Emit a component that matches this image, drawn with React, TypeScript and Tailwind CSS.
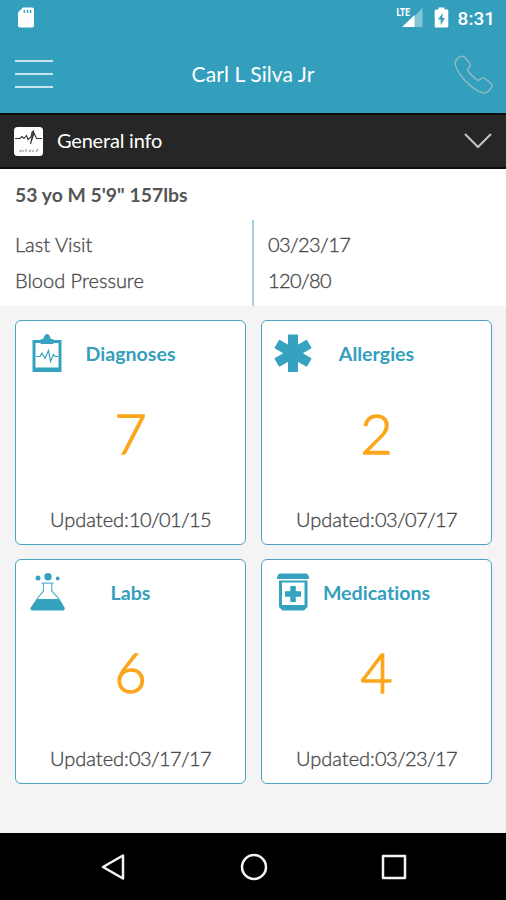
import React from 'react';

function DiagnosesIcon() {
  return (
    <svg viewBox="0 0 38 38" className="w-[38px] h-[38px]">
      <path d="M4.500 6H13v3H7.500v24.500h23V9H25V6h8.500v32h-29z" fill="#35a3c0" />
      <path d="M12.500 10V5.500l3-1Q16.500 0 19 0t3.500 4.500l3 1V10z" fill="#35a3c0" />
      <path d="M8 22.500h4l2-3.500 3 5.500 3.500-8 2 11 3-7 1.500 2H30" fill="none" stroke="#35a3c0" strokeWidth="1.200" />
    </svg>
  );
}

function AllergiesIcon() {
  return (
    <svg viewBox="0 0 38 38" className="w-[38px] h-[38px]" fill="#35a3c0">
      <rect x="14" y="0.500" width="10" height="37.500" rx="0.800" />
      <rect x="14" y="0.500" width="10" height="37.500" rx="0.800" transform="rotate(60 19 19.250)" />
      <rect x="14" y="0.500" width="10" height="37.500" rx="0.800" transform="rotate(120 19 19.250)" />
    </svg>
  );
}

function LabsIcon() {
  return (
    <svg viewBox="0 0 38 38" className="w-[38px] h-[38px]">
      <g fill="#35a3c0">
        <circle cx="10" cy="5" r="2.500" />
        <circle cx="20" cy="3.700" r="3.700" />
        <circle cx="29.700" cy="5.500" r="1.900" />
        <path d="M8.500 26h23L36.500 34.500Q37.500 37.500 34.500 37.500h-30Q1.500 37.500 2.800 34.500z" />
      </g>
      <path d="M13.500 10.200h12M15.500 10.500v7.500L9 26M23.700 10.500v7.500L31 26" fill="none" stroke="#5db5cc" strokeWidth="1.200" />
    </svg>
  );
}

function MedicationsIcon() {
  return (
    <svg viewBox="0 0 38 38" className="w-[38px] h-[38px]" fill="#35a3c0">
      <path d="M6 0.500h26Q35 1 35 6H3Q3 1 6 0.500z" />
      <path fillRule="evenodd" d="M5 7.500h28.500V34l-3.500 3.500H8.500L5 34zM8 9.500v22.500h22.500v-22.500z" />
      <path d="M16.300 13h5.500v5.200H27v5.600h-5.200V29h-5.500v-5.200H11v-5.600h5.300z" />
    </svg>
  );
}

const cards = [
  { title: 'Diagnoses', count: 7, updated: '10/01/15', icon: DiagnosesIcon },
  { title: 'Allergies', count: 2, updated: '03/07/17', icon: AllergiesIcon },
  { title: 'Labs', count: 6, updated: '03/17/17', icon: LabsIcon },
  { title: 'Medications', count: 4, updated: '03/23/17', icon: MedicationsIcon },
];

function StatusBar() {
  return (
    <div className="h-9 flex items-center justify-between pl-[17px] pr-[11px] text-white">
      <svg viewBox="0 0 17 22" className="w-[17px] h-[22px]">
        <path d="M6 0.500h9q2 0 2 2v16q0 2-2 2H3q-2 0-2-2V5.500z" fill="#fff" />
        <path d="M7.300 3v3M10.500 3v3M13.600 3v3" stroke="#339fbd" strokeWidth="1.400" />
      </svg>
      <div className="flex items-center">
        <svg viewBox="0 0 28 22" className="w-7 h-[22px] mr-[10px]">
          <path d="M8 20L26.500 1v19z" fill="#83c4d7" />
          <path d="M6 20L18.500 8v12z" fill="#fff" />
          <path d="M0 0h15.500v9.500H0z" fill="#339fbd" />
          <text x="0.500" y="9" fontFamily="Roboto" fontSize="11" fontWeight="800" textLength="13.500" lengthAdjust="spacingAndGlyphs" fill="#fff">LTE</text>
        </svg>
        <svg viewBox="0 0 15 22" className="w-[15px] h-[22px] mr-[9px]">
          <path d="M4.500 0.500h6V2.500H13q1.300 0 1.300 1.300v15.400Q14.300 20.500 13 20.500H2Q0.700 20.500 0.700 19.200V3.800Q0.700 2.500 2 2.500h2.500z" fill="#fff" />
          <path d="M8.800 6L4 12.500h2.700v5.500L11 11H8.300z" fill="#339fbd" />
        </svg>
        <span className="font-['Roboto'] text-[19px] leading-none font-medium">8:31</span>
      </div>
    </div>
  );
}

function Header() {
  return (
    <div className="h-[77px] grid grid-cols-[1fr_auto_1fr] items-center px-[15px] pb-[2px] text-white">
      <div className="flex flex-col gap-[11px] w-[38px]">
        <div className="h-0.5 bg-[#c5e4ee]" />
        <div className="h-0.5 bg-[#c5e4ee]" />
        <div className="h-0.5 bg-[#c5e4ee]" />
      </div>
      <h1 className="text-[21px] leading-none tracking-[0.1px]">Carl L Silva Jr</h1>
      <svg viewBox="0 0 40 40" className="w-10 h-10 justify-self-end -mr-[2px]" fill="none" stroke="#93b9c4" strokeWidth="1.400" strokeLinejoin="round">
        <path d="M2 9Q2.500 6 5.500 3.500T11.500 3L16.500 9Q18 11.500 16 13.500Q14 15.500 15 17Q18 21.500 24 26Q25.500 27 27.500 25Q30 23.500 32 24.500L38 29.500Q40 31.500 38 34Q34 39.500 30.500 39Q22 37 12.500 27Q3 16.500 2 9z" />
      </svg>
    </div>
  );
}

function InfoBar() {
  return (
    <div className="h-14 flex items-center justify-between bg-[#262626] border-y-2 border-[#0c0c0c] px-[14px] text-white">
      <div className="flex items-center">
        <svg viewBox="0 0 29 29" className="w-[29px] h-[29px] mr-[14px]">
          <rect width="29" height="29" rx="3.500" fill="#fff" />
          <path d="M1 11.500h5l2-2 2 2 2.500-3 1.500 4 3-2.500L18 5l1.500-1L16.500 17 20 6l2.500 5.500H28" fill="none" stroke="#333" strokeWidth="1.100" />
          <path d="M5.500 25l2-2M9 25v-2M12 25v-3M15 25l2-2M19 25v-2M22 25l2-3" stroke="#999" strokeWidth="1.200" />
        </svg>
        <span className="pb-[2px] text-[20px] leading-none tracking-[-0.2px]">General info</span>
      </div>
      <svg viewBox="0 0 28 16" className="w-7 h-4" fill="none" stroke="#c4c4c4" strokeWidth="2">
        <path d="M1 1l13 13L27 1" />
      </svg>
    </div>
  );
}

export default function App() {
  return (
    <div className="w-[506px] h-[900px] flex flex-col bg-[#f4f4f4] overflow-hidden font-['Lato',sans-serif] [font-variant-ligatures:none] text-[20px] text-[#555]">

      {/* Status bar and title */}
      <div className="bg-[#339fbd]">
        <StatusBar />
        <Header />
      </div>

      <InfoBar />

      {/* Patient summary */}
      <div className="bg-white h-[137px]">
        <p className="h-[51px] pt-[14px] px-[15px] text-[19.4px] leading-6 font-bold">53 yo M 5&apos;9&quot; 157lbs</p>
        <div className="flex h-[86px] leading-9 font-light text-[#4a4a4a] [-webkit-text-stroke:0.35px]">
          <div className="w-[254px] pl-[15px] pt-[6px] border-r-2 border-[#a5cfe2]">
            <p>Last Visit</p>
            <p>Blood Pressure</p>
          </div>
          <div className="pl-[14px] pt-[6px] tracking-[-0.6px]">
            <p>03/23/17</p>
            <p>120/80</p>
          </div>
        </div>
      </div>

      {/* Record cards */}
      <div className="flex-1 grid grid-cols-2 auto-rows-[225px] content-start gap-x-[15px] gap-y-[14px] pl-[15px] pr-[14px] pt-[14px]">
        {cards.map(({ title, count, updated, icon: Icon }) => (
          <div key={title} className="bg-white border border-[#4ba3bf] rounded-md flex flex-col items-center">
            <div className="w-full grid grid-cols-[38px_1fr_38px] items-center px-[12px] pt-[13px]">
              <Icon />
              <h2 className="pt-[2px] text-center text-[19.6px] leading-none font-bold text-[#339fbd]">{title}</h2>
            </div>
            <div className="h-[60px] mt-[31px] text-[56px] leading-[60px] font-light text-[#fba61c] [-webkit-text-stroke:1.3px]">{count}</div>
            <div className="mt-[44px] leading-6 font-light text-[#4a4a4a] [-webkit-text-stroke:0.35px]">
              Updated:<span className="tracking-[-0.6px]">{updated}</span>
            </div>
          </div>
        ))}
      </div>

      {/* Android navigation */}
      <div className="h-[67px] bg-black flex items-center justify-between pl-[100px] pr-[98px]">
        <svg viewBox="0 0 28 28" className="w-7 h-7" fill="none" stroke="#f4f4f4" strokeWidth="2.500" strokeLinejoin="round">
          <path d="M23 2.500v23L3 14z" />
        </svg>
        <svg viewBox="0 0 28 28" className="w-7 h-7" fill="none" stroke="#f4f4f4" strokeWidth="2.500">
          <circle cx="14" cy="14" r="12" />
        </svg>
        <svg viewBox="0 0 28 28" className="w-7 h-7" fill="none" stroke="#f4f4f4" strokeWidth="2.500" strokeLinejoin="round">
          <rect x="3" y="3" width="22" height="22" />
        </svg>
      </div>
    </div>
  );
}
